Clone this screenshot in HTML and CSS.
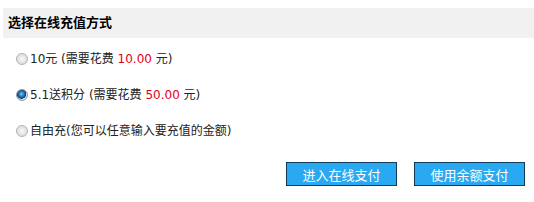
FILE: index.html
```html
<!DOCTYPE html>
<html lang="zh-CN">
<head>
  <meta charset="UTF-8" />
  <title>选择在线充值方式</title>
  <link rel="stylesheet" href="styles.css">
</head>
<body>
  <div class="pay-box">
    <div class="pay-title">选择在线充值方式</div>

    <ul class="pay-options">
      <li>
        <label><input type="radio" name="amount" value="10" /><span>10元 (需要花费 <em class="price">10.00</em> 元)</span></label>
      </li>
      <li>
        <label><input type="radio" name="amount" value="50" checked /><span>5.1送积分 (需要花费 <em class="price">50.00</em> 元)</span></label>
      </li>
      <li>
        <label><input type="radio" name="amount" value="free" /><span>自由充(您可以任意输入要充值的金额)</span></label>
      </li>
    </ul>

    <div class="pay-actions">
      <button class="pay-btn">进入在线支付</button>
      <button class="pay-btn">使用余额支付</button>
    </div>
  </div>
</body>
</html>
```

FILE: styles.css
```css
body {
  margin: 0;
  padding: 8px 0 0 3px;
  font-family: "DejaVu Sans", "Noto Sans CJK SC", sans-serif;
  font-size: 12px;
  color: #222;
  background: #fff;
}

.pay-title {
  background: #f1f1f1;
  height: 30px;
  line-height: 30px;
  padding-left: 5px;
  font-weight: bold;
  font-size: 13px;
  color: #000;
}

.pay-options {
  list-style: none;
  margin: 0;
  padding: 10px 0 0 13px;
}

.pay-options li {
  height: 36px;
  line-height: 22px;
}

.pay-options label {
  display: flex;
  align-items: center;
}

/* old-style grey radio */
.pay-options input {
  -webkit-appearance: none;
  appearance: none;
  margin: 0 2px 0 0;
  width: 12px;
  height: 12px;
  border-radius: 50%;
  border: 1px solid #b4b4b4;
  background: radial-gradient(circle at 50% 50%, #fafafa 0%, #e2e2e2 60%, #c8c8c8 100%);
  box-sizing: border-box;
}

.pay-options input:checked {
  border-color: #8a9aa8;
  background: radial-gradient(circle at 45% 40%, #7fc2f0 0%, #1e6fb8 35%, #0f3c66 55%, #dfe6ec 62%, #c2cad2 100%);
}

.price {
  font-style: normal;
  color: #e3001b;
}

.pay-actions {
  display: flex;
  justify-content: flex-end;
  gap: 17px;
  padding: 6px 9px 0 0;
}

.pay-btn {
  width: 111px;
  height: 24px;
  background: #29a9f2;
  border: 1px solid #123c5c;
  color: #fff;
  font-family: "DejaVu Sans", "Noto Sans CJK SC", sans-serif;
  font-size: 13px;
  padding: 0;
  cursor: pointer;
}
```
